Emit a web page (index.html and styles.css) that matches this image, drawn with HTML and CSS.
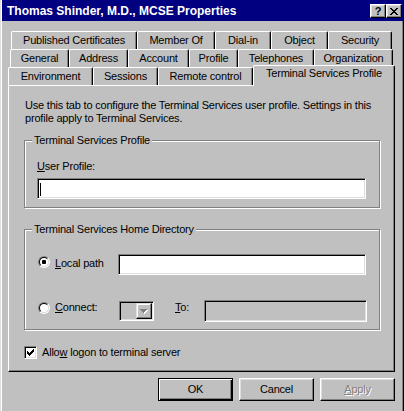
FILE: index.html
```html
<!DOCTYPE html>
<html>
<head>
<meta charset="utf-8">
<title>Thomas Shinder, M.D., MCSE Properties</title>
<link rel="stylesheet" href="styles.css">
</head>
<body>
<div class="window">
  <div class="titlebar">
    <span class="title">Thomas Shinder, M.D., MCSE Properties</span>
    <span class="cap-btn help">?</span>
    <span class="cap-btn close">
      <svg width="8" height="7" viewBox="0 0 8 7" shape-rendering="crispEdges"><path fill="#000" d="M0 0h2v1h-2z M6 0h2v1h-2z M1 1h2v1h-2z M5 1h2v1h-2z M2 2h4v1h-4z M3 3h2v1h-2z M2 4h4v1h-4z M1 5h2v1h-2z M5 5h2v1h-2z M0 6h2v1h-2z M6 6h2v1h-2z"/></svg>
    </span>
  </div>
  <div class="dialog">
    <div class="tabs">
      <div class="tab-row row1">
        <div class="tab t-pub">Published Certificates</div>
        <div class="tab t-member">Member Of</div>
        <div class="tab t-dial">Dial-in</div>
        <div class="tab t-object">Object</div>
        <div class="tab t-security">Security</div>
      </div>
      <div class="tab-row row2">
        <div class="tab t-general">General</div>
        <div class="tab t-address">Address</div>
        <div class="tab t-account">Account</div>
        <div class="tab t-profile">Profile</div>
        <div class="tab t-phones">Telephones</div>
        <div class="tab t-org">Organization</div>
      </div>
      <div class="tab-row row3">
        <div class="tab t-env">Environment</div>
        <div class="tab t-sessions">Sessions</div>
        <div class="tab t-remote">Remote control</div>
        <div class="tab selected t-ts">Terminal Services Profile</div>
      </div>
    </div>
    <div class="panel">
      <p class="intro">Use this tab to configure the Terminal Services user profile. Settings in this<br>profile apply to Terminal Services.</p>
      <fieldset class="group group-profile">
        <legend>Terminal Services Profile</legend>
        <div class="group-body body-profile">
          <div class="field-label"><u>U</u>ser Profile:</div>
          <div class="textbox tb-profile"><span class="caret"></span></div>
        </div>
      </fieldset>
      <fieldset class="group group-home">
        <legend>Terminal Services Home Directory</legend>
        <div class="group-body body-home">
          <div class="opt-row row-local">
            <span class="radio"><span class="radio-in checked"></span></span>
            <span class="opt-label lbl-local"><u>L</u>ocal path</span>
            <div class="textbox tb-local"></div>
          </div>
          <div class="opt-row row-connect">
            <span class="radio"><span class="radio-in"></span></span>
            <span class="opt-label lbl-connect"><u>C</u>onnect:</span>
            <div class="combo">
              <span class="combo-btn">
                <svg width="8" height="5" viewBox="0 0 8 5" shape-rendering="crispEdges"><path fill="#fff" d="M1 1h7v1h-7z M2 2h5v1h-5z M3 3h3v1h-3z M4 4h1v1h-1z"/><path fill="#808080" d="M0 0h7v1h-7z M1 1h5v1h-5z M2 2h3v1h-3z M3 3h1v1h-1z"/></svg>
              </span>
            </div>
            <span class="opt-label lbl-to"><u>T</u>o:</span>
            <div class="textbox disabled tb-to"></div>
          </div>
        </div>
      </fieldset>
      <div class="check-row">
        <span class="checkbox">
          <svg width="7" height="7" viewBox="0 0 7 7" shape-rendering="crispEdges"><path fill="#000" d="M0 2h1v3h-1z M1 3h1v3h-1z M2 4h1v3h-1z M3 3h1v3h-1z M4 2h1v3h-1z M5 1h1v3h-1z M6 0h1v3h-1z"/></svg>
        </span>
        <span class="check-label">Allo<u>w</u> logon to terminal server</span>
      </div>
    </div>
    <div class="buttons">
      <div class="btn default">OK</div>
      <div class="btn">Cancel</div>
      <div class="btn disabled"><u>A</u>pply</div>
    </div>
  </div>
</div>
</body>
</html>
```
FILE: styles.css
```css
html, body {
  margin: 0;
  padding: 0;
  background: #c0c0c0;
}
body {
  font-family: "Liberation Sans", Arial, sans-serif;
  font-size: 11px;
  line-height: 13px;
  letter-spacing: -0.2px;
  color: #000;
}
.window {
  width: 404px;
  height: 411px;
  box-sizing: border-box;
  background: #c0c0c0;
  border-left: 1px solid #dfdfdf;
  border-right: 1px solid #000;
  box-shadow: inset 1px 0 0 #fff, inset -1px 0 0 #808080;
  overflow: hidden;
}
.titlebar {
  display: flex;
  align-items: center;
  height: 21px;
  box-sizing: border-box;
  margin-left: 1px;
  padding: 1px 1px 0 5px;
  background: #000080;
  color: #fff;
}
.title {
  flex: 1;
  font-size: 12px;
  font-weight: bold;
  letter-spacing: 0;
  line-height: 20px;
  white-space: nowrap;
}
.cap-btn {
  width: 16px;
  height: 14px;
  box-sizing: border-box;
  display: flex;
  align-items: center;
  justify-content: center;
  background: #c0c0c0;
  border: 1px solid;
  border-color: #fff #000 #000 #fff;
  box-shadow: inset -1px -1px 0 #808080, inset 1px 1px 0 #dfdfdf;
  color: #000;
}
.help {
  font-weight: bold;
  font-size: 11px;
  line-height: 12px;
  letter-spacing: 0;
}
.close svg {
  display: block;
  margin-left: -1px;
}
.dialog {
  padding: 10px 8px 0 7px;
}
.tabs {
  display: flex;
  flex-direction: column;
}
.tab-row {
  display: flex;
  height: 18px;
}
.row1 { margin-left: 3px; }
.row2 { margin-left: 2px; }
.row3 { margin-left: 0; }
.tab {
  height: 18px;
  box-sizing: border-box;
  border-top: 1px solid #fff;
  border-left: 1px solid #fff;
  border-right: 1px solid #000;
  border-radius: 2px 2px 0 0;
  box-shadow: inset -1px 0 0 #808080;
  background: #c0c0c0;
  text-align: center;
  line-height: 17px;
  white-space: nowrap;
}
.tab.selected {
  position: relative;
  z-index: 1;
  height: 21px;
  margin-top: -2px;
  line-height: 14px;
}
.t-pub { width: 126px; }
.t-member { width: 78px; }
.t-dial { width: 56px; }
.t-object { width: 57px; }
.t-security { width: 64px; }
.t-general { width: 59px; }
.t-address { width: 59px; }
.t-account { width: 61px; }
.t-profile { width: 49px; }
.t-phones { width: 76px; }
.t-org { width: 79px; }
.t-env { width: 85px; }
.t-sessions { width: 65px; }
.t-remote { width: 95px; }
.t-ts { width: 142px; }
.panel {
  height: 287px;
  box-sizing: border-box;
  border-top: 1px solid #fff;
  border-left: 1px solid #fff;
  border-right: 1px solid #000;
  border-bottom: 1px solid #000;
  box-shadow: inset -1px -1px 0 #808080;
  padding: 13px 0 0 15px;
}
.intro {
  margin: 0 0 0 1px;
  white-space: nowrap;
}
.group {
  width: 356px;
  box-sizing: border-box;
  margin: 0;
  padding: 0;
  min-width: 0;
  border: 1px solid #808080;
  box-shadow: 1px 1px 0 #fff, inset 1px 1px 0 #fff;
}
.group legend {
  margin-left: 7px;
  padding: 0 2px;
  line-height: 13px;
  background: #c0c0c0;
}
.group-profile { margin-top: 9px; }
.group-home { margin-top: 15px; }
.body-profile { padding: 13px 0 8px 12px; }
.body-home { padding: 18px 0 7px 13px; }
.field-label {
  margin-bottom: 5px;
}
.textbox {
  height: 21px;
  box-sizing: border-box;
  background: #fff;
  border: 1px solid;
  border-color: #808080 #fff #fff #808080;
  box-shadow: inset 1px 1px 0 #000, inset -1px -1px 0 #dfdfdf;
}
.textbox.disabled {
  background: #c0c0c0;
}
.tb-profile {
  width: 329px;
  display: flex;
}
.caret {
  display: block;
  width: 1px;
  height: 13px;
  margin: 4px 0 0 2px;
  background: #000;
}
.opt-row {
  display: flex;
  align-items: flex-start;
}
.row-connect { margin-top: 26px; }
.radio {
  width: 12px;
  height: 12px;
  box-sizing: border-box;
  border-radius: 50%;
  border: 1px solid;
  border-color: #808080 #fff #fff #808080;
  display: flex;
}
.row-local .radio { margin-top: 2px; }
.row-connect .radio { margin-top: 1px; }
.radio-in {
  flex: 1;
  border-radius: 50%;
  border: 1px solid;
  border-color: #000 #dfdfdf #dfdfdf #000;
  background: #fff;
  display: flex;
  align-items: center;
  justify-content: center;
}
.radio-in.checked::after {
  content: "";
  width: 4px;
  height: 4px;
  border-radius: 1px;
  background: #000;
}
.opt-label {
  margin-left: 5px;
}
.lbl-local { width: 63px; margin-top: 3px; }
.lbl-connect { width: 64px; }
.lbl-to { width: 29px; margin-left: 21px; }
.tb-local { width: 248px; }
.tb-to { width: 163px; height: 22px; margin-top: -1px; }
.combo {
  width: 35px;
  height: 20px;
  box-sizing: border-box;
  border: 1px solid;
  border-color: #808080 #fff #fff #808080;
  box-shadow: inset 1px 1px 0 #000, inset -1px -1px 0 #dfdfdf;
  padding: 1px 1px 1px 2px;
  display: flex;
  justify-content: flex-end;
}
.combo-btn {
  width: 16px;
  box-sizing: border-box;
  border: 1px solid;
  border-color: #dfdfdf #000 #000 #dfdfdf;
  box-shadow: inset -1px -1px 0 #808080, inset 1px 1px 0 #fff;
  display: flex;
  align-items: center;
  justify-content: center;
}
.check-row {
  display: flex;
  align-items: center;
  margin-top: 16px;
}
.checkbox {
  width: 13px;
  height: 13px;
  box-sizing: border-box;
  background: #fff;
  border: 1px solid;
  border-color: #808080 #fff #fff #808080;
  box-shadow: inset 1px 1px 0 #000, inset -1px -1px 0 #dfdfdf;
  padding: 2px 0 0 2px;
}
.checkbox svg { display: block; }
.check-label { margin-left: 5px; }
.buttons {
  display: flex;
  justify-content: flex-end;
  gap: 6px;
  margin-top: 6px;
}
.btn {
  width: 75px;
  height: 23px;
  box-sizing: border-box;
  border: 1px solid;
  border-color: #fff #000 #000 #fff;
  box-shadow: inset -1px -1px 0 #808080, inset 1px 1px 0 #dfdfdf;
  text-align: center;
  line-height: 21px;
}
.btn.default {
  border-color: #000;
  box-shadow: inset 1px 1px 0 #fff, inset -1px -1px 0 #000, inset -2px -2px 0 #808080;
}
.btn.disabled {
  color: #808080;
  text-shadow: 1px 1px 0 #fff;
}
```
